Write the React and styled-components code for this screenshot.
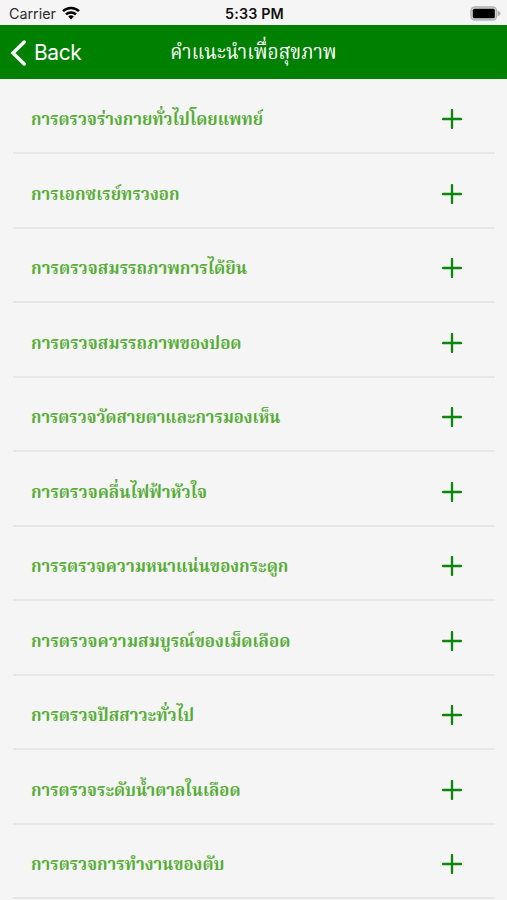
import React from 'react';
import styled, { createGlobalStyle } from 'styled-components';

const GlobalStyle = createGlobalStyle`
  * { box-sizing: border-box; }
  body { margin: 0; background: #f5f5f5; overflow: hidden; }
`;

const Screen = styled.div`
  width: 507px;
  height: 900px;
  overflow: hidden;
  background: #f5f5f5;
  font-family: "Inter", "Noto Sans Thai", sans-serif;
`;

const StatusBar = styled.div`
  display: grid;
  grid-template-columns: 1fr auto 1fr;
  align-items: center;
  height: 25px;
  padding: 2px 6px 0 8px;
  color: #111;
  font-size: 14.3px;
`;

const Carrier = styled.div`
  display: flex;
  align-items: center;
  gap: 6px;
  padding-left: 1px;
  color: #2c2c2c;
`;

const WifiIcon = styled.svg`
  width: 18px;
  height: 14px;
  margin-top: -2px;
`;

const Time = styled.div`
  font-weight: 600;
  letter-spacing: 0.15px;
`;

const BatterySlot = styled.div`
  display: flex;
  justify-content: flex-end;
`;

const BatteryIcon = styled.svg`
  width: 31px;
  height: 15px;
  margin-top: -1px;
`;

const NavBar = styled.header`
  display: grid;
  grid-template-columns: 1fr auto 1fr;
  align-items: center;
  height: 54px;
  padding: 0 10px;
  background: #008000;
  color: #fff;
`;

const BackButton = styled.div`
  display: flex;
  align-items: center;
  gap: 7px;
  padding-top: 2px;
  font-size: 21px;
  letter-spacing: -0.4px;
  line-height: 28px;
`;

const BackIcon = styled.svg`
  width: 17px;
  height: 26px;
`;

const Title = styled.h1`
  margin: 0 -4px;
  padding-top: 3px;
  font-size: 21px;
  font-weight: 400;
  font-family: "Noto Serif Thai", "Liberation Serif", serif;
  white-space: nowrap;
  transform: scaleX(0.91);
`;

const List = styled.main`
  padding: 0.5px 12px 0 13px;
`;

const Row = styled.div`
  display: flex;
  align-items: center;
  justify-content: space-between;
  height: 74.53px;
  padding: 7px 33px 0 18px;
  border-bottom: 2px solid #e7e7e7;
`;

const Label = styled.span`
  padding-top: 3px;
  color: #58ad38;
  font-family: "Noto Serif Thai", "Liberation Serif", serif;
  font-size: 18px;
  font-weight: 700;
  white-space: nowrap;
  transform: scaleX(${(p) => p.$stretch});
  transform-origin: left center;
`;

const PlusIcon = styled.svg`
  width: 20px;
  height: 20px;
`;

const items = [
  { text: 'การตรวจร่างกายทั่วไปโดยแพทย์', stretch: 0.925 },
  { text: 'การเอกซเรย์ทรวงอก', stretch: 0.932 },
  { text: 'การตรวจสมรรถภาพการได้ยิน', stretch: 0.938 },
  { text: 'การตรวจสมรรถภาพของปอด', stretch: 0.938 },
  { text: 'การตรวจวัดสายตาและการมองเห็น', stretch: 0.919 },
  { text: 'การตรวจคลื่นไฟฟ้าหัวใจ', stretch: 0.936 },
  { text: 'การรตรวจความหนาแน่นของกระดูก', stretch: 0.931 },
  { text: 'การตรวจความสมบูรณ์ของเม็ดเลือด', stretch: 0.935 },
  { text: 'การตรวจปัสสาวะทั่วไป', stretch: 0.935 },
  { text: 'การตรวจระดับน้ำตาลในเลือด', stretch: 0.927 },
  { text: 'การตรวจการทำงานของตับ', stretch: 0.928 },
];

export default function App() {
  return (
    <Screen>
      <GlobalStyle />
      <StatusBar>
        <Carrier>
          Carrier
          <WifiIcon viewBox="0 0 18 14" fill="none" stroke="#000" strokeWidth="2.5">
            <path d="M1 5.1 A11.6 11.6 0 0 1 17 5.1" />
            <path d="M4 8.4 A7.2 7.2 0 0 1 14 8.4" />
            <path d="M9 13.4 L6.2 10.6 A4 4 0 0 1 11.8 10.6 Z" fill="#000" stroke="none" />
          </WifiIcon>
        </Carrier>
        <Time>5:33 PM</Time>
        <BatterySlot>
          <BatteryIcon viewBox="0 0 31 15">
            <rect x="1" y="1" width="25.5" height="13" rx="3.8" fill="#d8d8d8" stroke="#b4b4b4" strokeWidth="1.4" />
            <rect x="2.8" y="2.8" width="22" height="9.4" rx="1.5" fill="#000" />
            <path d="M27.6 4.6 Q30.6 5.9 30.6 7.5 Q30.6 9.1 27.6 10.4 Z" fill="#b0b0b0" />
          </BatteryIcon>
        </BatterySlot>
      </StatusBar>
      <NavBar>
        <BackButton>
          <BackIcon viewBox="0 0 17 26" fill="none" stroke="#fff" strokeWidth="3.4" strokeLinecap="round">
            <path d="M14.2 2 L3 13 L14.2 24" />
          </BackIcon>
          Back
        </BackButton>
        <Title>คำแนะนำเพื่อสุขภาพ</Title>
      </NavBar>
      <List>
        {items.map(({ text, stretch }) => (
          <Row key={text}>
            <Label $stretch={stretch}>{text}</Label>
            <PlusIcon viewBox="0 0 20 20" stroke="#0c860c" strokeWidth="2.3" strokeLinecap="round">
              <path d="M10 1 V19 M1 10 H19" />
            </PlusIcon>
          </Row>
        ))}
      </List>
    </Screen>
  );
}
